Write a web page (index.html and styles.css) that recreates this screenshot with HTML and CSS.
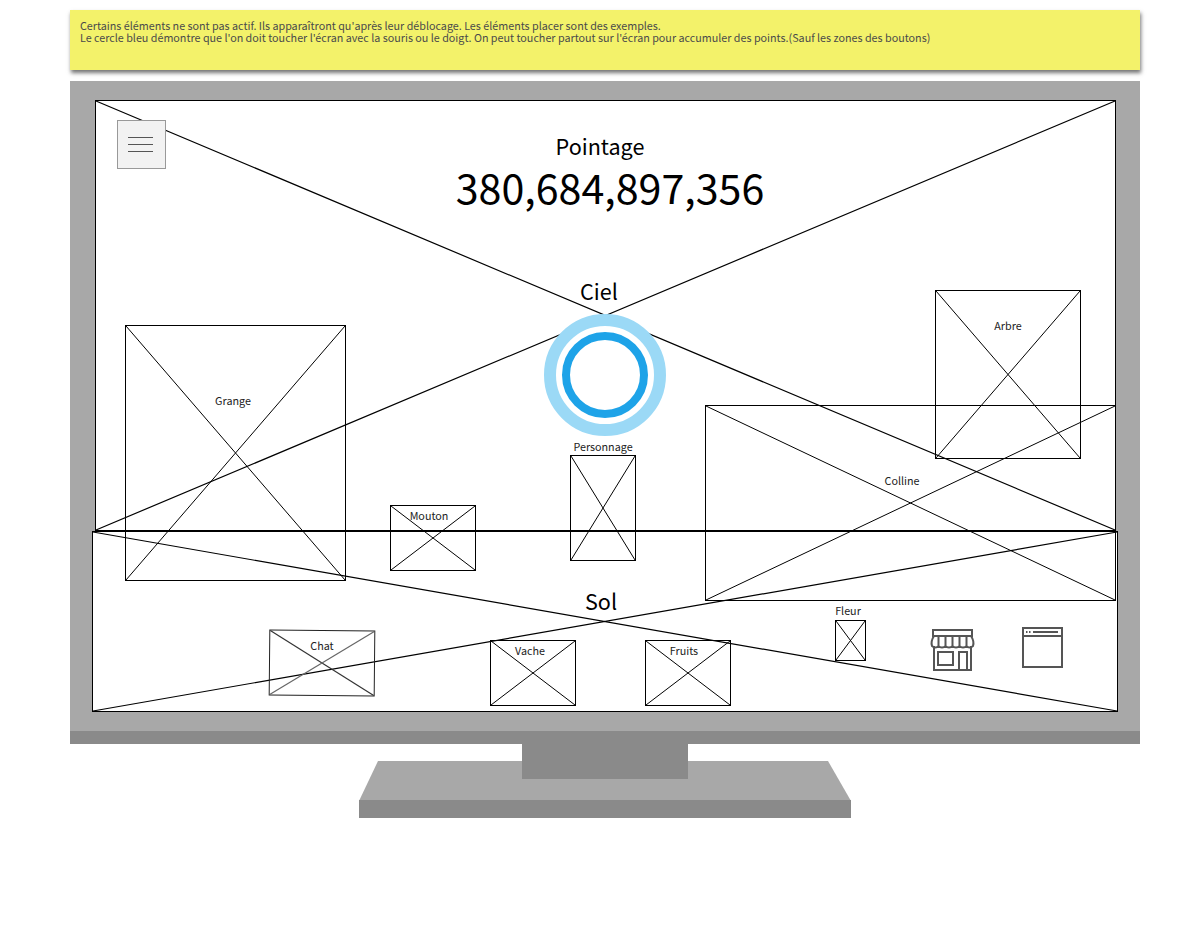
FILE: index.html
```html
<!DOCTYPE html>
<html lang="fr">
<head>
<meta charset="utf-8">
<title>Maquette</title>
<link rel="stylesheet" href="styles.css">
</head>
<body>
<main class="page">
  <aside class="note">
    <p>Certains éléments ne sont pas actif. Ils apparaîtront qu'après leur déblocage. Les éléments placer sont des exemples.</p>
    <p>Le cercle bleu démontre que l'on doit toucher l'écran avec la souris ou le doigt. On peut toucher partout sur l'écran pour accumuler des points.(Sauf les zones des boutons)</p>
  </aside>
  <section class="monitor">
    <div class="bezel">
      <div class="ph sky"><svg class="cross" viewBox="0 0 100 100" preserveAspectRatio="none"><path d="M0 0L100 100M100 0L0 100"/></svg></div>
      <div class="ph sol"><svg class="cross" viewBox="0 0 100 100" preserveAspectRatio="none"><path d="M0 0L100 100M100 0L0 100"/></svg></div>

      <button class="menu" type="button" aria-label="Menu"><span></span><span></span><span></span></button>
      <div class="label score-title">Pointage</div>
      <div class="label score">380,684,897,356</div>
      <div class="label big ciel">Ciel</div>
      <div class="ring"><div class="ring-inner"></div></div>

      <div class="ph grange"><svg class="cross" viewBox="0 0 100 100" preserveAspectRatio="none"><path d="M0 0L100 100M100 0L0 100"/></svg></div>
      <div class="ph personnage"><svg class="cross" viewBox="0 0 100 100" preserveAspectRatio="none"><path d="M0 0L100 100M100 0L0 100"/></svg></div>
      <div class="ph mouton"><svg class="cross" viewBox="0 0 100 100" preserveAspectRatio="none"><path d="M0 0L100 100M100 0L0 100"/></svg></div>
      <div class="ph colline"><svg class="cross" viewBox="0 0 100 100" preserveAspectRatio="none"><path d="M0 0L100 100M100 0L0 100"/></svg></div>
      <div class="ph arbre"><svg class="cross" viewBox="0 0 100 100" preserveAspectRatio="none"><path d="M0 0L100 100M100 0L0 100"/></svg></div>
      <div class="ph chat"><svg class="cross" viewBox="0 0 100 100" preserveAspectRatio="none"><path d="M0 0L100 100"/><path class="faint" d="M100 0L0 100"/></svg></div>
      <div class="ph vache"><svg class="cross" viewBox="0 0 100 100" preserveAspectRatio="none"><path d="M0 0L100 100M100 0L0 100"/></svg></div>
      <div class="ph fruits"><svg class="cross" viewBox="0 0 100 100" preserveAspectRatio="none"><path d="M0 0L100 100M100 0L0 100"/></svg></div>
      <div class="ph fleur"><svg class="cross" viewBox="0 0 100 100" preserveAspectRatio="none"><path d="M0 0L100 100M100 0L0 100"/></svg></div>

      <div class="label small l-grange">Grange</div>
      <div class="label small l-personnage">Personnage</div>
      <div class="label small l-mouton">Mouton</div>
      <div class="label small l-colline">Colline</div>
      <div class="label small l-arbre">Arbre</div>
      <div class="label big l-sol">Sol</div>
      <div class="label small l-chat">Chat</div>
      <div class="label small l-vache">Vache</div>
      <div class="label small l-fruits">Fruits</div>
      <div class="label small l-fleur">Fleur</div>

      <svg class="icon store" viewBox="0 0 43 42" aria-hidden="true">
        <path class="line" d="M2 1H41V7H2ZM3 17V41H40V17M7 23H22V36H7ZM28 41V23H36V41"/>
        <path class="line thin" d="M3 7C1 10 0 14 1 17C3 19 6 19 7.500 17C9 19 13 19 14.500 17C16 19 20 19 21.500 17C23 19 27 19 28.500 17C30 19 34 19 35.500 17C37 19 40 19 42 17C43 14 42 10 40 7M7.500 7V17M14.500 7V17M21.500 7V17M28.500 7V17M35.500 7V17"/>
      </svg>
      <svg class="icon browser" viewBox="0 0 41 41" aria-hidden="true">
        <path class="line" d="M1 1H40V40H1Z"/>
        <path class="line thin" d="M1 9H40"/>
        <path class="line" d="M4 5H5.500M7 5H8.500M11 5H36"/>
      </svg>
    </div>
    <div class="chin"></div>
  </section>
  <svg class="stand" viewBox="0 0 492 74" aria-hidden="true">
    <path class="stand-top" d="M19 17H469L492 57H0Z"/>
    <rect class="stand-dark" x="0" y="56" width="492" height="18"/>
    <rect class="stand-dark" x="163" y="0" width="166" height="35"/>
  </svg>
</main>
</body>
</html>
```

FILE: styles.css
```css
* { box-sizing: border-box; }

html, body {
  margin: 0;
  background: #fff;
}

body {
  font-family: "Noto Sans CJK JP", "Noto Sans", sans-serif;
  color: #000;
}

.page {
  width: 1201px;
  height: 939px;
  padding: 10px 61px 0 70px;
  overflow: hidden;
}

.note {
  height: 60px;
  padding: 10px 10px 0;
  background: #f3f26a;
  box-shadow: 1px 3px 4px rgba(0, 0, 0, .55);
  font-size: 10.76px;
  line-height: 12px;
  color: #4a4a4a;
}

.note p { margin: 0; }

.monitor { margin-top: 11px; }

.bezel {
  position: relative;
  height: 650px;
  background: #a8a8a8;
}

.chin {
  height: 13px;
  background: #8a8a8a;
}

.stand {
  display: block;
  width: 492px;
  height: 74px;
  margin-left: 289px;
}

.stand-top { fill: #a8a8a8; }
.stand-dark { fill: #8a8a8a; }

/* wireframe placeholders: free canvas */
.ph {
  position: absolute;
  border: 1px solid #000;
}

.cross {
  display: block;
  width: 100%;
  height: 100%;
  overflow: visible;
}

.cross path {
  fill: none;
  stroke: #000;
  stroke-width: 1;
  vector-effect: non-scaling-stroke;
}

.sky .cross path,
.sol .cross path { stroke-width: 1.2; }

.sky { left: 25px; top: 19px; width: 1021px; height: 431px; background: #fff; }
.sol { left: 22px; top: 450px; width: 1026px; height: 181px; background: #fff; }
.grange { left: 55px; top: 244px; width: 221px; height: 256px; }
.personnage { left: 500px; top: 374px; width: 66px; height: 106px; }
.mouton { left: 320px; top: 424px; width: 86px; height: 66px; }
.colline { left: 635px; top: 324px; width: 411px; height: 196px; }
.arbre { left: 865px; top: 209px; width: 146px; height: 169px; }
.chat { left: 199px; top: 549px; width: 106px; height: 66px; border-color: #222; transform: rotate(.55deg); }
.chat .cross path { stroke: #333; stroke-width: 1.2; }
.chat .cross path.faint { stroke: #666; }
.vache { left: 420px; top: 559px; width: 86px; height: 66px; }
.fruits { left: 575px; top: 559px; width: 86px; height: 66px; }
.fleur { left: 765px; top: 539px; width: 31px; height: 41px; }

.menu {
  position: absolute;
  left: 47px;
  top: 39px;
  display: flex;
  flex-direction: column;
  align-items: center;
  gap: 6px;
  width: 49px;
  height: 49px;
  padding: 16px 2px 0 0;
  background: #f2f2f2;
  border: 1px solid #999;
  border-radius: 0;
}

.menu span {
  display: block;
  flex: none;
  width: 25px;
  height: 1px;
  background: #555;
}

.label {
  position: absolute;
  white-space: nowrap;
  text-align: center;
  transform: translateX(-50%);
}

.small { font-size: 10.76px; line-height: 14px; color: #222; }
.big { font-size: 21.6px; line-height: 30px; }

.score-title { left: 530px; top: 49px; font-size: 21.6px; line-height: 32px; }
.score { left: 540px; top: 76px; font-size: 41.2px; line-height: 58px; }
.ciel { left: 529px; top: 195px; }
.l-sol { left: 531px; top: 505px; }

.l-grange { left: 163px; top: 313px; }
.l-personnage { left: 533px; top: 359px; }
.l-mouton { left: 359px; top: 428px; }
.l-colline { left: 832px; top: 393px; }
.l-arbre { left: 938px; top: 238px; }
.l-chat { left: 252px; top: 558px; }
.l-vache { left: 460px; top: 563px; }
.l-fruits { left: 614px; top: 563px; }
.l-fleur { left: 778px; top: 523px; }

.ring {
  position: absolute;
  left: 474px;
  top: 233px;
  display: flex;
  align-items: center;
  justify-content: center;
  width: 122px;
  height: 122px;
  background: #fff;
  border: 12px solid #9bd9f6;
  border-radius: 50%;
}

.ring-inner {
  width: 86px;
  height: 86px;
  border: 8px solid #1ea3e8;
  border-radius: 50%;
}

.icon {
  position: absolute;
  overflow: visible;
}

.store { left: 861px; top: 548px; width: 43px; height: 42px; }
.browser { left: 952px; top: 546px; width: 41px; height: 41px; }

.line {
  fill: none;
  stroke: #555;
  stroke-width: 2;
}

.line.thin { stroke-width: 2; }
```
